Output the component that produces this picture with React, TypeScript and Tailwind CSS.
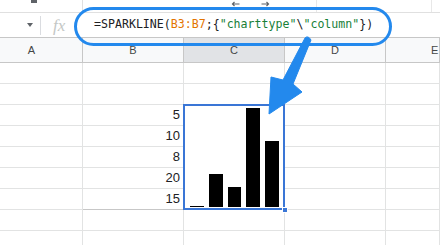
import React from "react"

const values = [5, 10, 8, 20, 15]
const cols = ["A", "B", "C", "D", "E"]

function Bars() {
  const min = Math.min(...values)
  const max = Math.max(...values)
  return (
    <div className="flex h-full items-end gap-[5px] pl-[6px] pr-[5px] pt-[3px] pb-[2px]">
      {values.map((v, i) => (
        <div
          key={i}
          className="flex-1 bg-black"
          style={{ height: Math.max(1, Math.round(((v - min) / (max - min)) * 99)) }}
        />
      ))}
    </div>
  )
}

function TinyArrow({ dir }: { dir: "left" | "right" }) {
  return (
    <svg width="9" height="6" viewBox="0 0 9 6" className="mt-[1px]">
      {dir === "left" ? (
        <path d="M8.5 3H1.5M3.5 1L1.5 3L3.5 5" stroke="#5f6368" strokeWidth="1.2" fill="none" />
      ) : (
        <path d="M0.5 3H7.5M5.5 1L7.5 3L5.5 5" stroke="#5f6368" strokeWidth="1.2" fill="none" />
      )}
    </svg>
  )
}

export default function App() {
  return (
    <div className="relative h-[245px] w-[440px] overflow-hidden bg-white font-['Liberation_Sans',Arial,sans-serif] text-[#202124]">
      {/* toolbar edge */}
      <div className="flex h-[13px] items-start border-b border-[#e0e0e0]">
        <div className="ml-[31px] h-[3px] w-[6px] bg-[#5f6368]" />
        <div className="ml-[45px] h-full w-px bg-[#e0e0e0]" />
        <div className="ml-[148px]">
          <TinyArrow dir="left" />
        </div>
        <div className="ml-[21px]">
          <TinyArrow dir="right" />
        </div>
        <div className="ml-[46px] h-full w-px bg-[#e8e8e8]" />
        <div className="ml-[114px] h-full w-px bg-[#e8e8e8]" />
      </div>

      {/* formula bar */}
      <div className="flex h-[25px] items-center border-b border-[#c7c7c7]">
        <div className="flex w-[40px] justify-end pr-[7px]">
          <div className="h-0 w-0 border-x-[3px] border-t-[4px] border-x-transparent border-t-[#5f6368]" />
        </div>
        <div className="h-[19px] w-px bg-[#dadce0]" />
        <div className="w-[53px] pl-[12px] font-['Liberation_Serif',serif] text-[17px] italic leading-none text-[#c4c7c5]">fx</div>
        <div className="whitespace-pre font-['DejaVu_Sans_Mono',monospace] text-[11.6px] leading-none">
          <span>=SPARKLINE(</span>
          <span className="text-[#e37400]">B3:B7</span>
          <span>;{"{"}</span>
          <span className="text-[#188038]">"charttype"</span>
          <span>\</span>
          <span className="text-[#188038]">"column"</span>
          <span>{"})"}</span>
        </div>
      </div>

      {/* column headers */}
      <div className="grid h-[25px] grid-cols-[83px_101px_101px_101px_1fr] text-[11px] text-[#444746]">
        {cols.map((c) => (
          <div
            key={c}
            className={`flex items-center border-b border-r border-[#c7c7c7] ${
              c === "C" ? "bg-[#e1e3e6]" : "bg-[#f8f9fa]"
            } ${c === "A" ? "justify-center pr-[19px]" : c === "E" ? "pl-[45px]" : "justify-center"}`}
          >
            {c}
          </div>
        ))}
      </div>

      {/* grid */}
      <div className="grid grid-cols-[83px_101px_101px_101px_1fr] auto-rows-[21px] text-[13px]">
        {Array.from({ length: 9 }).map((_, r) =>
          cols.map((c) => {
            const row = r + 1
            if (c === "C" && row >= 4 && row <= 7) return null
            if (c === "C" && row === 3) {
              return (
                <div key={c + row} className="relative row-span-5 border-b border-r border-[#e2e3e3]">
                  <Bars />
                  <div className="absolute -left-px -top-px -right-px -bottom-px border-2 border-[#3a76d6]" />
                  <div className="absolute -right-[4px] -bottom-[4px] h-[6px] w-[6px] border border-white bg-[#3a76d6]" />
                </div>
              )
            }
            const val = c === "B" && row >= 3 && row <= 7 ? values[row - 3] : null
            return (
              <div
                key={c + row}
                className={`flex items-center justify-end border-b border-r pr-[3px] ${
                  c === "B" && row === 7 ? "border-b-[#c7c7c7]" : "border-b-[#e2e3e3]"
                } border-r-[#e2e3e3] ${c === "A" && row >= 3 && row <= 7 ? "border-r-[#c7c7c7]" : ""}`}
              >
                {val}
              </div>
            )
          })
        )}
      </div>

      {/* annotation: outline + arrow */}
      <div className="absolute left-[74px] top-[7px] h-[39px] w-[318px] rounded-full border-[3px] border-[#2389ed]" />
      <svg className="absolute left-0 top-0" width="440" height="245" viewBox="0 0 440 245">
        <path
          d="M305 38 Q308 35 311 40 L293 84 L302 92 L269 114 L271 77 L283 80 Z"
          fill="#2389ed"
          stroke="#2389ed"
          strokeWidth="1"
          strokeLinejoin="round"
        />
      </svg>
    </div>
  )
}
